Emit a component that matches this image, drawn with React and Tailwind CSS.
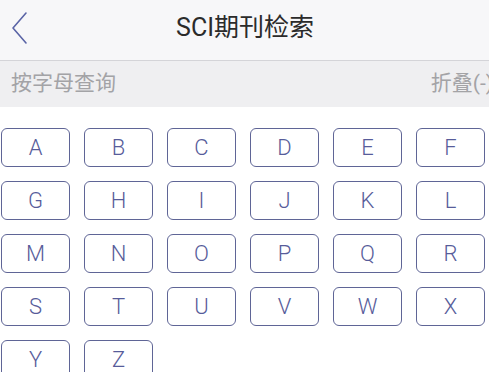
import React from 'react';

const letters = 'ABCDEFGHIJKLMNOPQRSTUVWXYZ'.split('');

export default function App() {
  return (
    <div className="w-[489px] h-[372px] overflow-hidden bg-white font-['Roboto','Noto_Sans_CJK_SC',sans-serif]">
      <div className="relative h-[61px] bg-[#f7f7f9] border-b border-[#d4d4d8] flex items-center justify-center">
        <button className="absolute left-[10px] top-[11px] w-[20px] h-[34px]">
          <svg width="20" height="34" viewBox="0 0 20 34" fill="none">
            <path d="M16 2 L3 17 L16 32" stroke="#5a64a6" strokeWidth="1.6" strokeLinecap="round" strokeLinejoin="round" />
          </svg>
        </button>
        <h1 className="text-[25px] text-[#2b2b2b] leading-none -mt-[6px] ml-[1px]">SCI期刊检索</h1>
      </div>
      <div className="h-[46px] bg-[#efeff1] flex items-center justify-between pl-[11px] text-[21px] text-[#a3a3a6]">
        <span>按字母查询</span>
        <span className="whitespace-nowrap -mr-[4px]">折叠(-)</span>
      </div>
      <div className="grid grid-cols-[repeat(6,69px)] gap-[14px] pl-[1px] pt-[21px]">
        {letters.map((l) => (
          <button
            key={l}
            className="h-[39px] rounded-[6px] border-[1.5px] border-[#5f6596] flex items-center justify-center text-[22px] font-light text-[#575c9a]"
          >
            {l}
          </button>
        ))}
      </div>
    </div>
  );
}
